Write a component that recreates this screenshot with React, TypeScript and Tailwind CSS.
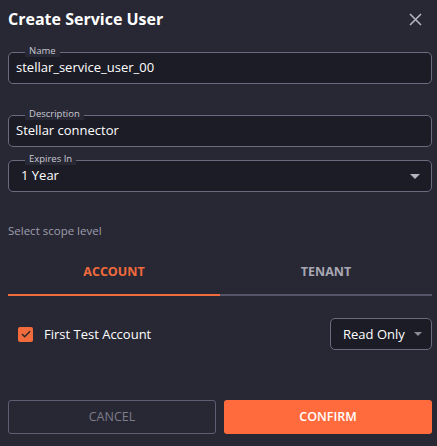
import { useState } from 'react'

function OutlinedField({ label, value, select }: { label: string; value: string; select?: boolean }) {
  return (
    <div className={`relative h-[32px] rounded-[5px] border border-[#6b6b80] bg-[#1c1c26] flex items-center pr-[7px] ${select ? 'pl-[12px]' : 'pl-[7px]'}`}>
      <span className="absolute -top-[8px] left-[16px] px-[4px] bg-[#282834] text-[9.5px] leading-[12px] font-medium text-[#c9c9d3]">
        {label}
      </span>
      <span className="text-[13px] text-white">{value}</span>
      {select && (
        <svg className="ml-auto mr-[4px]" width="10" height="5" viewBox="0 0 10 5">
          <path d="M0 0h10L5 5z" fill="#b4b4c0" />
        </svg>
      )}
    </div>
  )
}

export default function App() {
  const [tab, setTab] = useState<'account' | 'tenant'>('account')
  const [checked, setChecked] = useState(true)

  return (
    <div
      className="w-[437px] h-[446px] bg-[#282834] pl-[8px] pr-[5px] text-white overflow-hidden"
      style={{ fontFamily: '"Open Sans", "Liberation Sans", sans-serif' }}
    >
      <div className="flex items-center justify-between h-[38px]">
        <h1 className="text-[16px] font-bold">Create Service User</h1>
        <button className="mr-[10px] text-[#b4b4c0]">
          <svg width="13" height="13" viewBox="0 0 13 13" fill="none" stroke="currentColor" strokeWidth="1.6">
            <path d="M1 1l11 11M12 1L1 12" />
          </svg>
        </button>
      </div>

      <div className="mt-[14px]">
        <OutlinedField label="Name" value="stellar_service_user_00" />
      </div>
      <div className="mt-[31px]">
        <OutlinedField label="Description" value="Stellar connector" />
      </div>
      <div className="mt-[13px]">
        <OutlinedField label="Expires In" value="1 Year" select />
      </div>

      <p className="mt-[30px] text-[11.5px] text-[#9e9eac]">Select scope level</p>

      <div className="mt-[12px] grid grid-cols-2">
        <button
          onClick={() => setTab('account')}
          className={`h-[45px] text-[12.5px] font-bold border-b-2 ${tab === 'account' ? 'text-[#f26b3d] border-[#f26b3d]' : 'text-[#a8a8b4] border-[#55556a]'}`}
        >
          ACCOUNT
        </button>
        <button
          onClick={() => setTab('tenant')}
          className={`h-[45px] text-[12.5px] font-bold border-b-2 ${tab === 'tenant' ? 'text-[#f26b3d] border-[#f26b3d]' : 'text-[#a8a8b4] border-[#55556a]'}`}
        >
          TENANT
        </button>
      </div>

      <div className="mt-[22px] flex items-center justify-between">
        <label className="flex items-center gap-[11px] pl-[10px]">
          <button
            onClick={() => setChecked(!checked)}
            className={`w-[15px] h-[15px] rounded-[2px] flex items-center justify-center ${checked ? 'bg-[#f26b3d]' : 'border border-[#8a8a9a]'}`}
          >
            {checked && (
              <svg width="10" height="8" viewBox="0 0 10 8" fill="none" stroke="#2a2a2a" strokeWidth="1.6">
                <path d="M1 4l2.7 2.7L9 1.2" />
              </svg>
            )}
          </button>
          <span className="text-[13px]">First Test Account</span>
        </label>
        <div className="w-[102px] h-[32px] rounded-[5px] border border-[#6b6b80] bg-[#1c1c26] flex items-center pl-[12px] pr-[9px]">
          <span className="text-[13px]">Read Only</span>
          <svg className="ml-auto" width="8" height="4" viewBox="0 0 10 5">
            <path d="M0 0h10L5 5z" fill="#8a8a98" />
          </svg>
        </div>
      </div>

      <div className="mt-[50px] grid grid-cols-2 gap-[8px]">
        <button className="h-[34px] rounded-[3px] border border-[#5e5e72] text-[12.5px] font-medium text-[#7c7c8a]">
          CANCEL
        </button>
        <button className="h-[34px] rounded-[3px] bg-[#ff6b3d] text-[12.5px] font-semibold text-white">
          CONFIRM
        </button>
      </div>
    </div>
  )
}
